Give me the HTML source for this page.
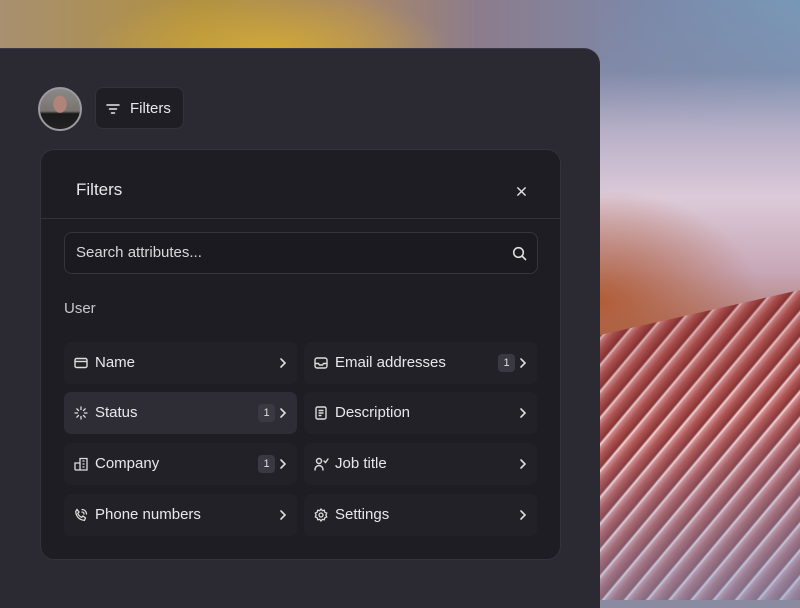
<!DOCTYPE html>
<html><head><meta charset="utf-8"><style>
*{box-sizing:border-box;margin:0;padding:0}
body{width:800px;height:600px;overflow:hidden;position:relative;font-family:"Liberation Sans",sans-serif;background:#8a8aa0}
.bg{position:absolute;inset:0;background:
radial-gradient(ellipse 180px 60px at 270px 50px,#d0a838 0%,rgba(208,168,56,0) 100%),
linear-gradient(90deg,#a89070 0%,#b09040 25%,#a88868 45%,#8c7c8c 60%,#7c88a8 80%,#7898b8 100%);}
.r1{position:absolute;left:600px;top:0;width:200px;height:600px;background:
radial-gradient(ellipse 160px 110px at 0px 300px,rgba(175,85,40,.85) 0%,rgba(175,85,40,0) 100%),
linear-gradient(180deg,rgba(130,140,170,0) 0%,rgba(130,140,170,.6) 12%,#b8b0c8 22%,#dccad8 33%,#c8a8b8 45%,#a86858 58%,#9a4838 70%,#8a3838 82%,#a06070 100%);}
.stripes{position:absolute;left:600px;top:250px;width:200px;height:350px;
clip-path:polygon(0 85px,200px 40px,200px 350px,0 350px);
background:repeating-linear-gradient(-50deg,#8a3434 0px,#b05858 8px,#d08888 13px,#f2dce0 15px,#8a3434 17px);}
.st2{position:absolute;left:600px;top:250px;width:200px;height:350px;
clip-path:polygon(0 85px,200px 40px,200px 350px,0 350px);
background:linear-gradient(165deg,rgba(120,30,30,.35) 0%,rgba(0,0,0,0) 50%,rgba(130,170,220,.55) 100%)}
.panel{position:absolute;left:0;top:48px;width:600px;height:560px;background:#2b2a33;border-radius:0 16px 0 0;border-top:1px solid #3a3944}
.avatar{position:absolute;left:38px;top:87px;width:44px;height:44px;border-radius:50%;border:2px solid #9a9aa0;background:radial-gradient(ellipse 7px 9px at 50% 38%,#b08478 0 90%,rgba(0,0,0,0) 100%),linear-gradient(180deg,#8a8a88 0%,#7a7470 55%,#1a1a1a 62%,#222 100%)}
.fbtn{position:absolute;left:95px;top:87px;width:89px;height:42px;border-radius:8px;background:#1f1e25;border:1px solid #33323b;color:#e8e8ec;font-size:15px}
.fbtn span{position:absolute;left:34px;top:12px}
.card{position:absolute;left:40px;top:149px;width:521px;height:411px;border-radius:14px;background:#1e1d24;border:1px solid #34333c}
.title{position:absolute;left:35px;top:30px;color:#e8e8ec;font-size:17px}
.close{position:absolute;left:475px;top:34px}
.div{position:absolute;left:0;right:0;top:68px;height:1px;background:#34333c}
.search{position:absolute;left:23px;top:82px;width:474px;height:42px;border-radius:8px;border:1px solid #36353e;background:#1b1a20;color:#d8d8dc;font-size:15px;padding:11px 11px}
.user{position:absolute;left:23px;top:150px;color:#c8c8cc;font-size:15px}
.row{position:absolute;width:233px;height:42px;border-radius:7px;background:#222128;color:#e8e8ec;font-size:15px}
.row.h{background:#2e2d35}
.row .t{position:absolute;left:31px;top:12px}
.row svg.i{position:absolute;left:10px;top:14px}
.row .ch{position:absolute;right:10px;top:15px}
.badge{position:absolute;right:22px;top:12px;width:17px;height:18px;border-radius:4px;background:#3a3941;font-size:11px;text-align:center;line-height:18px;color:#ddd}
</style></head><body>
<div class="bg"></div><div class="r1"></div><div class="stripes"></div><div class="st2"></div>
<div class="panel"></div>
<div class="avatar"></div>
<div class="fbtn"><svg style="position:absolute;left:10px;top:15px" width="14" height="12" viewBox="0 0 14 12" fill="none" stroke="#e8e8ec" stroke-width="1.5" stroke-linecap="round"><path d="M1 2h12M3.5 6h7M5.5 10h3"/></svg><span>Filters</span></div>
<div class="card">
<div class="title">Filters</div>
<div class="close"><svg width="11" height="11" viewBox="0 0 12 12" stroke="#e0e0e4" stroke-width="1.6" stroke-linecap="round"><path d="M2 2l8 8M10 2l-8 8"/></svg></div>
<div class="div"></div>
<div class="search">Search attributes...<svg style="position:absolute;right:10px;top:13px" width="15" height="15" viewBox="0 0 15 15" fill="none" stroke="#ddd" stroke-width="1.6" stroke-linecap="round"><circle cx="6.5" cy="6.5" r="4.8"/><path d="M10 10l3.5 3.5"/></svg></div>
<div class="user">User</div>
</div>
<div class="row" style="left:64px;top:342px"><svg class="i" width="14" height="14" viewBox="0 0 14 14" fill="none" stroke="#ddd" stroke-width="1.4"><rect x="1" y="2.5" width="12" height="9" rx="1.5"/><path d="M1 5.5h12"/></svg><span class="t">Name</span><svg class="ch" width="8" height="12" viewBox="0 0 8 12" fill="none" stroke="#ddd" stroke-width="1.6" stroke-linecap="round"><path d="M2 2l4 4-4 4"/></svg></div>
<div class="row h" style="left:64px;top:392px"><svg class="i" width="14" height="14" viewBox="0 0 14 14" fill="none" stroke="#ddd" stroke-width="1.3" stroke-linecap="round"><path d="M7 1v2.5M7 10.5V13M1 7h2.5M10.5 7H13M2.8 2.8l1.7 1.7M9.5 9.5l1.7 1.7M2.8 11.2l1.7-1.7M9.5 4.5l1.7-1.7"/></svg><span class="t">Status</span><div class="badge">1</div><svg class="ch" width="8" height="12" viewBox="0 0 8 12" fill="none" stroke="#ddd" stroke-width="1.6" stroke-linecap="round"><path d="M2 2l4 4-4 4"/></svg></div>
<div class="row" style="left:64px;top:443px"><svg class="i" width="14" height="14" viewBox="0 0 14 14" fill="none" stroke="#ddd" stroke-width="1.3"><path d="M1 13V6h5V13M6 13V1.5h7V13H1M8.5 4h2M8.5 7h2M8.5 10h2"/></svg><span class="t">Company</span><div class="badge">1</div><svg class="ch" width="8" height="12" viewBox="0 0 8 12" fill="none" stroke="#ddd" stroke-width="1.6" stroke-linecap="round"><path d="M2 2l4 4-4 4"/></svg></div>
<div class="row" style="left:64px;top:494px"><svg class="i" width="14" height="14" viewBox="0 0 14 14" fill="none" stroke="#ddd" stroke-width="1.3" stroke-linecap="round"><path d="M3 1.5l2 2.5-1.2 1.5c.8 1.8 2 3 3.8 3.8L9 8l2.5 2-1 2.3C5.5 12 2 8.5 1.7 3.5zM8 1.5a4.5 4.5 0 014.5 4.5M8 4a2 2 0 012 2"/></svg><span class="t">Phone numbers</span><svg class="ch" width="8" height="12" viewBox="0 0 8 12" fill="none" stroke="#ddd" stroke-width="1.6" stroke-linecap="round"><path d="M2 2l4 4-4 4"/></svg></div>
<div class="row" style="left:304px;top:342px"><svg class="i" width="14" height="14" viewBox="0 0 14 14" fill="none" stroke="#ddd" stroke-width="1.4"><rect x="1" y="2" width="12" height="10" rx="2"/><path d="M1 7.5h3.5l1 1.5h3l1-1.5H13"/></svg><span class="t">Email addresses</span><div class="badge">1</div><svg class="ch" width="8" height="12" viewBox="0 0 8 12" fill="none" stroke="#ddd" stroke-width="1.6" stroke-linecap="round"><path d="M2 2l4 4-4 4"/></svg></div>
<div class="row" style="left:304px;top:392px"><svg class="i" width="14" height="14" viewBox="0 0 14 14" fill="none" stroke="#ddd" stroke-width="1.4"><rect x="2" y="1" width="10" height="12" rx="1.5"/><path d="M4.5 4.5h5M4.5 7h5M4.5 9.5h3"/></svg><span class="t">Description</span><svg class="ch" width="8" height="12" viewBox="0 0 8 12" fill="none" stroke="#ddd" stroke-width="1.6" stroke-linecap="round"><path d="M2 2l4 4-4 4"/></svg></div>
<div class="row" style="left:304px;top:443px"><svg class="i" width="15" height="14" viewBox="0 0 15 14" fill="none" stroke="#ddd" stroke-width="1.4" stroke-linecap="round"><circle cx="5" cy="4" r="2.5"/><path d="M1 13c0-3 2-4.5 4-4.5s4 1.5 4 4.5M10 4l1.5 1.5L14 2"/></svg><span class="t">Job title</span><svg class="ch" width="8" height="12" viewBox="0 0 8 12" fill="none" stroke="#ddd" stroke-width="1.6" stroke-linecap="round"><path d="M2 2l4 4-4 4"/></svg></div>
<div class="row" style="left:304px;top:494px"><svg class="i" width="14" height="14" viewBox="0 0 14 14" fill="none" stroke="#ddd" stroke-width="1.3"><circle cx="7" cy="7" r="2"/><path d="M7 1l1.3 1.6 2-.4.5 2 1.9.9-.8 1.9.8 1.9-1.9.9-.5 2-2-.4L7 13l-1.3-1.6-2 .4-.5-2-1.9-.9.8-1.9-.8-1.9 1.9-.9.5-2 2 .4z"/></svg><span class="t">Settings</span><svg class="ch" width="8" height="12" viewBox="0 0 8 12" fill="none" stroke="#ddd" stroke-width="1.6" stroke-linecap="round"><path d="M2 2l4 4-4 4"/></svg></div>
</body></html>
